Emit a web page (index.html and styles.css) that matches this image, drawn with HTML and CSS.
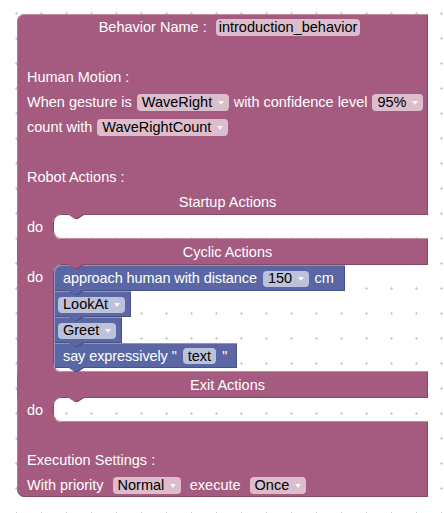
FILE: index.html
```html
<!DOCTYPE html>
<html>
<head>
<meta charset="utf-8">
<link rel="stylesheet" href="styles.css">
</head>
<body>
<svg class="grid" width="444" height="513" aria-hidden="true">
  <defs>
    <pattern id="dots" width="25" height="25" patternUnits="userSpaceOnUse">
      <path d="M15 13.5h3M16.5 12v3" stroke="#cccccc" stroke-width="1" fill="none"/>
    </pattern>
  </defs>
  <rect width="444" height="513" fill="url(#dots)"/>
</svg>

<div class="block">
  <div class="arm arm-top">
    <div class="row center"><span class="lbl bn">Behavior Name :</span><span class="field ftext">introduction_behavior</span></div>
    <div class="row"></div>
    <div class="row"><span class="lbl">Human Motion :</span></div>
    <div class="row gap5"><span class="lbl">When gesture is</span><span class="field">WaveRight<i class="arrow"></i></span><span class="lbl">with confidence level</span><span class="field">95%<i class="arrow"></i></span></div>
    <div class="row gap5"><span class="lbl">count with</span><span class="field">WaveRightCount<i class="arrow"></i></span></div>
    <div class="row"></div>
    <div class="row"><span class="lbl">Robot Actions :</span></div>
    <div class="row center"><span class="lbl">Startup Actions</span></div>
  </div>

  <div class="stmt s-empty">
    <div class="spine">do</div>
    <div class="mouth">
      <svg class="tab" width="17" height="6" viewBox="0 0 17 6"><path d="M1 1L7 5H10L16 1Z" fill="#844966"/><path d="M0 0H15L9 4H6Z" fill="#a55b80"/></svg>
    </div>
  </div>

  <div class="arm"><div class="row center"><span class="lbl">Cyclic Actions</span></div></div>

  <div class="stmt s-full">
    <div class="spine">do</div>
    <div class="mouth">
      <svg class="tab" width="17" height="6" viewBox="0 0 17 6"><path d="M1 1L7 5H10L16 1Z" fill="#844966"/><path d="M0 0H15L9 4H6Z" fill="#a55b80"/></svg>
      <div class="sblock first"><span class="lbl">approach human with distance</span><span class="field bf">150<i class="arrow"></i></span><span class="lbl">cm</span>
        <svg class="btab" width="17" height="6" viewBox="0 0 17 6"><path d="M1 1L7 5H10L16 1Z" fill="#495284"/><path d="M0 0H15L9 4H6Z" fill="#5b67a5"/></svg></div>
      <div class="sblock fonly"><span class="field bf">LookAt<i class="arrow"></i></span>
        <svg class="btab" width="17" height="6" viewBox="0 0 17 6"><path d="M1 1L7 5H10L16 1Z" fill="#495284"/><path d="M0 0H15L9 4H6Z" fill="#5b67a5"/></svg></div>
      <div class="sblock fonly"><span class="field bf">Greet<i class="arrow"></i></span>
        <svg class="btab" width="17" height="6" viewBox="0 0 17 6"><path d="M1 1L7 5H10L16 1Z" fill="#495284"/><path d="M0 0H15L9 4H6Z" fill="#5b67a5"/></svg></div>
      <div class="sblock last"><span class="lbl">say expressively "</span><span class="field bf ftext">text</span><span class="lbl">"</span>
        <svg class="btab" width="17" height="6" viewBox="0 0 17 6"><path d="M1 1L7 5H10L16 1Z" fill="#495284"/><path d="M0 0H15L9 4H6Z" fill="#5b67a5"/></svg></div>
    </div>
  </div>

  <div class="arm"><div class="row center"><span class="lbl">Exit Actions</span></div></div>

  <div class="stmt s-empty">
    <div class="spine">do</div>
    <div class="mouth">
      <svg class="tab" width="17" height="6" viewBox="0 0 17 6"><path d="M1 1L7 5H10L16 1Z" fill="#844966"/><path d="M0 0H15L9 4H6Z" fill="#a55b80"/></svg>
    </div>
  </div>

  <div class="arm arm-bottom">
    <div class="row"></div>
    <div class="row"><span class="lbl">Execution Settings :</span></div>
    <div class="row gap9"><span class="lbl">With priority</span><span class="field">Normal<i class="arrow"></i></span><span class="lbl">execute</span><span class="field">Once<i class="arrow"></i></span></div>
  </div>
</div>
</body>
</html>
```

FILE: styles.css
```css
html, body {
  margin: 0;
  padding: 0;
  background: #ffffff;
}
body {
  position: relative;
  width: 444px;
  height: 513px;
  overflow: hidden;
  font-family: "Liberation Sans", Arial, sans-serif;
  font-size: 14.5px;
}
.grid {
  position: absolute;
  left: 0;
  top: 0;
  z-index: 0;
}
.block {
  position: relative;
  z-index: 1;
  margin: 14px 0 0 17px;
  width: 411px;
  display: flex;
  flex-direction: column;
  color: #ffffff;
}
.arm {
  background: #a55b80;
  padding-left: 10px;
  box-shadow: inset -1px 0 0 #844966;
}
.arm-top {
  border-top-left-radius: 8px;
  box-shadow: inset 0 1px 0 #c08ca6, inset 1px 0 0 #b47898, inset -1px 0 0 #844966;
}
.arm-bottom {
  border-bottom-left-radius: 8px;
  box-shadow: inset 0 -1px 0 #844966, inset -1px 0 0 #844966, inset 1px 0 0 #b47898;
}
.row {
  height: 25px;
  box-sizing: border-box;
  padding-top: 2px;
  display: flex;
  align-items: center;
  white-space: pre;
}
.row.center {
  justify-content: center;
}
.gap5 { gap: 5px; }
.gap9 { gap: 9px; }
.bn { margin-left: 4px; margin-right: 9px; }
.lbl { line-height: 17px; }

.field {
  display: inline-flex;
  align-items: center;
  height: 17px;
  padding: 0 5px;
  border-radius: 4px;
  background: #dbbdcc;
  color: #000000;
  line-height: 17px;
}
.field.ftext { padding: 0 3px; }
.field.bf { background: #bdc2db; height: 16px; }
.field.bf.ftext { padding: 0 5px; }
.arrow {
  display: inline-block;
  width: 0;
  height: 0;
  margin-left: 5.5px;
  margin-top: 1px;
  border-left: 3px solid transparent;
  border-right: 3px solid transparent;
  border-top: 4px solid rgba(255, 255, 255, 0.85);
}

.stmt {
  display: flex;
  overflow: hidden;
}
.s-empty { height: 25px; }
.s-full { height: 108px; }
.spine {
  position: relative;
  z-index: 1;
  width: 36px;
  flex: none;
  background: #a55b80;
  box-sizing: border-box;
  padding: 1px 0 0 10px;
  line-height: 25px;
  box-shadow: inset 1px 0 0 #b47898;
}
.mouth {
  position: relative;
  flex: 1;
  margin-right: -80px;
  border-top: 1px solid #844966;
  border-left: 1px solid #844966;
  border-bottom: 1px solid #c08ca6;
  border-radius: 8px 0 0 8px;
  box-shadow: 0 0 0 40px #a55b80;
}
.tab {
  position: absolute;
  z-index: 2;
  top: -1px;
  left: 14px;
}
.sblock {
  position: relative;
  display: flex;
  align-items: center;
  gap: 6px;
  width: max-content;
  height: 26px;
  box-sizing: border-box;
  padding: 1px 11px 0 9px;
  background: #5b67a5;
  box-shadow: inset 0 1px 0 #8c95c0, inset 1px 0 0 #8c95c0, inset -1px 0 0 #495284, inset 0 -1px 0 #495284;
}
.sblock .lbl { letter-spacing: -0.1px; }
.sblock.first { border-top-left-radius: 8px; }
.sblock.fonly { padding: 1px 6px 0 4px; }
.sblock.last { height: 25px; padding-right: 10px; }
.btab {
  position: absolute;
  z-index: 2;
  bottom: -5px;
  left: 14px;
}
```
